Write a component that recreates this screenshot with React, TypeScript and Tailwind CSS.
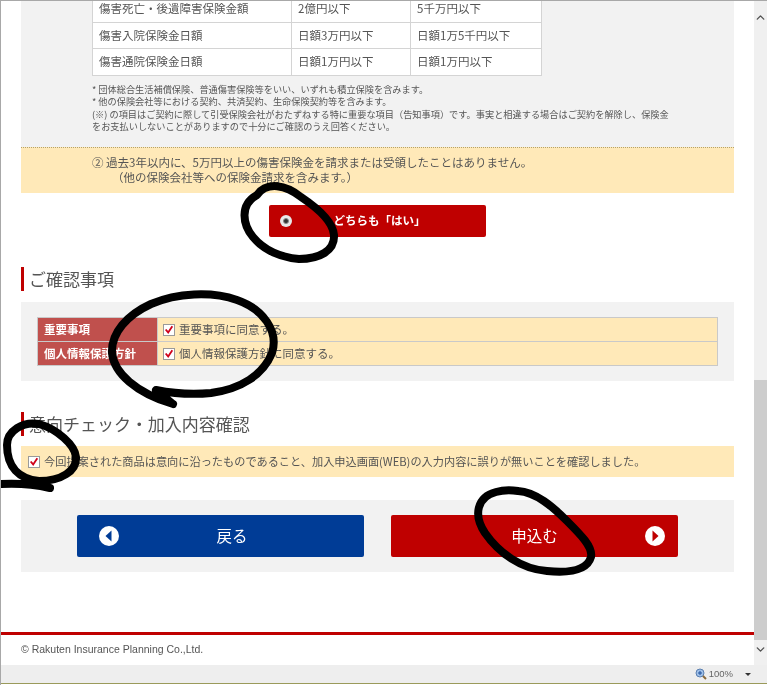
import { ChevronDown, ChevronUp } from "lucide-react"

const limits = [
  ["傷害死亡・後遺障害保険金額", "2億円以下", "5千万円以下"],
  ["傷害入院保険金日額", "日額3万円以下", "日額1万5千円以下"],
  ["傷害通院保険金日額", "日額1万円以下", "日額1万円以下"],
]

const consents = [
  ["重要事項", "重要事項に同意する。"],
  ["個人情報保護方針", "個人情報保護方針に同意する。"],
]

function CheckMark() {
  return (
    <span className="flex h-[12px] w-[12px] shrink-0 items-center justify-center border border-[#9a9a9a] bg-white">
      <svg viewBox="0 0 12 12" className="h-[11px] w-[11px]">
        <path d="M2 6 L5 9.5 L10 2" fill="none" stroke="#d0021b" strokeWidth="2.2" />
      </svg>
    </span>
  )
}

function Heading({ title }: { title: string }) {
  return (
    <h2 className="flex h-[24px] items-center border-l-[3px] border-[#bf0000] pl-[5px] text-[17px] font-normal text-[#555]">
      {title}
    </h2>
  )
}

function RoundArrow({ left }: { left?: boolean }) {
  return (
    <svg viewBox="0 0 20 20" className="h-[20px] w-[20px]">
      <circle cx="10" cy="10" r="10" fill="#fff" />
      <path
        d={left ? "M12.5 4.5 L6.5 10 L12.5 15.5 Z" : "M7.5 4.5 L13.5 10 L7.5 15.5 Z"}
        fill={left ? "#003c96" : "#bf0000"}
      />
    </svg>
  )
}

function Scribbles() {
  return (
    <svg viewBox="0 0 767 685" className="pointer-events-none absolute top-0 left-0 h-[685px] w-[767px]">
      <g fill="none" stroke="#000" strokeWidth="8" strokeLinecap="round" strokeLinejoin="round">
        <path d="M256 194 C266 180 285 184 300 196 C318 208 332 222 333 234 C334 250 318 258 298 258 C278 256 262 248 252 236 C242 224 238 204 256 194" />
        <path d="M172 403 L155 389 C170 392 190 394 210 392 C240 388 262 374 271 352 C278 330 262 308 236 299 C210 290 176 292 150 303 C126 314 110 332 111 352 C113 372 135 392 172 403" />
        <path d="M6 444 C6 430 22 420 38 423 C56 428 74 444 75 456 C76 470 60 480 38 480 C18 478 6 466 6 444 M0 483 C18 482 36 484 49 487" />
        <path d="M517 490 C535 491 552 506 566 520 C580 534 592 546 590 556 C586 570 566 572 546 570 C520 568 498 552 484 532 C472 514 476 496 495 491 C502 489 510 489 517 490" />
      </g>
    </svg>
  )
}

export default function App() {
  return (
    <div className="relative flex h-[685px] w-[767px] flex-col overflow-hidden border-t border-l border-[#a8a8a8] bg-white font-['Noto_Sans_CJK_JP','Liberation_Sans',sans-serif] text-[#555] blur-[0.35px]">
      <div className="flex h-[664px] min-h-0">
        <main className="flex w-[753px] flex-col overflow-hidden">
          <div className="px-[20px]">
            <section className="h-[146px] overflow-hidden bg-[#f2f2f2] pl-[71px]">
              <table className="mt-[-6px] w-[450px] table-fixed border-collapse bg-white text-[11.5px]">
                <tbody>
                  {limits.map((row) => (
                    <tr key={row[0]} className="h-[26.5px]">
                      <td className="w-[199px] border border-[#d4d4d4] pl-[6px]">{row[0]}</td>
                      <td className="w-[119px] border border-[#d4d4d4] pl-[6px]">{row[1]}</td>
                      <td className="border border-[#d4d4d4] pl-[6px]">{row[2]}</td>
                    </tr>
                  ))}
                </tbody>
              </table>
              <div className="mt-[7px] text-[9.2px] leading-[12.6px]">
                <p>* 団体総合生活補償保険、普通傷害保険等をいい、いずれも積立保険を含みます。</p>
                <p>* 他の保険会社等における契約、共済契約、生命保険契約等を含みます。</p>
                <p>(※) の項目はご契約に際して引受保険会社がおたずねする特に重要な項目（告知事項）です。事実と相違する場合はご契約を解除し、保険金</p>
                <p>をお支払いしないことがありますので十分にご確認のうえ回答ください。</p>
              </div>
            </section>
            <div className="h-[46px] border-t border-dotted border-[#b5a36a] bg-[#ffe9b8] pt-[7px] pl-[71px] text-[11.5px] leading-[15px]">
              <p>② 過去3年以内に、5万円以上の傷害保険金を請求または受領したことはありません。</p>
              <p className="pl-[20px]">（他の保険会社等への保険金請求を含みます。）</p>
            </div>

            <div className="mt-[12px] flex justify-center">
              <div className="relative flex h-[32px] w-[217px] items-center justify-center rounded-[2px] bg-[#bf0000] pl-[4px] text-[11.5px] font-bold text-white">
                <span className="absolute left-[11px] flex h-[12px] w-[12px] items-center justify-center rounded-full bg-[#e8e8e8]">
                  <span className="h-[6px] w-[6px] rounded-full border border-[#888] bg-[#333]" />
                </span>
                どちらも「はい」
              </div>
            </div>

            <div className="mt-[30px]">
              <Heading title="ご確認事項" />
            </div>
            <section className="mt-[11px] h-[79px] bg-[#f2f2f2] px-[16px] pt-[15px]">
              <table className="w-full table-fixed border-collapse text-[11.5px]">
                <tbody>
                  {consents.map(([label, text]) => (
                    <tr key={label} className="h-[24px]">
                      <th className="w-[120px] border border-[#c9c9c9] bg-[#c0504d] pl-[6px] text-left font-bold text-white">
                        {label}
                      </th>
                      <td className="border border-[#c9c9c9] bg-[#ffe9b8] pl-[5px]">
                        <span className="flex items-center gap-[4px]">
                          <CheckMark />
                          {text}
                        </span>
                      </td>
                    </tr>
                  ))}
                </tbody>
              </table>
            </section>

            <div className="mt-[31px]">
              <Heading title="意向チェック・加入内容確認" />
            </div>
            <div className="mt-[10px] flex h-[31px] items-center gap-[4px] bg-[#ffe9b8] pl-[7px] text-[11.2px]">
              <CheckMark />
              <span>今回提案された商品は意向に沿ったものであること、加入申込画面(WEB)の入力内容に誤りが無いことを確認しました。</span>
            </div>

            <section className="mt-[23px] flex h-[72px] items-center justify-center gap-[27px] bg-[#f2f2f2]">
              <div className="flex h-[42px] w-[287px] items-center rounded-[2px] bg-[#003c96] pl-[22px] text-[15.5px] text-white">
                <RoundArrow left />
                <span className="flex-1 pr-[22px] pl-[3px] text-center">戻る</span>
              </div>
              <div className="flex h-[42px] w-[287px] items-center rounded-[2px] bg-[#bf0000] pr-[13px] text-[15.5px] text-white">
                <span className="flex-1 pl-[33px] text-center">申込む</span>
                <RoundArrow />
              </div>
            </section>
          </div>

          <footer className="mt-[60px] flex-1 border-t-[3px] border-[#bf0000]">
            <p className="pt-[7px] pl-[20px] font-['Liberation_Sans',sans-serif] text-[10.5px]">
              © Rakuten Insurance Planning Co.,Ltd.
            </p>
          </footer>
        </main>

        <aside className="flex w-[13px] flex-col bg-[#f0f0f0] text-[#505050]">
          <div className="h-[379px] pt-[10px]">
            <ChevronUp size={13} strokeWidth={2.5} />
          </div>
          <div className="h-[260px] bg-[#cdcdcd]" />
          <div className="pt-[3px]">
            <ChevronDown size={13} strokeWidth={2.5} />
          </div>
        </aside>
      </div>

      <div className="flex h-[19px] items-center justify-end border-b border-[#9a9a5a] bg-[#eeeeee] pr-[16px] font-['Liberation_Sans',sans-serif] text-[9.5px] text-[#666]">
        <svg viewBox="0 0 12 12" className="mr-[2px] h-[12px] w-[12px]">
          <circle cx="5" cy="5" r="4" fill="#9fc0e8" stroke="#5b7fb0" />
          <path d="M3 5 H7 M5 3 V7" stroke="#1f4f9a" strokeWidth="1" />
          <path d="M8 8 L11 11" stroke="#8a6a3a" strokeWidth="2" />
        </svg>
        100%
        <span className="ml-[12px] h-0 w-0 border-x-[3px] border-t-[3px] border-x-transparent border-t-[#333]" />
      </div>

      <Scribbles />
    </div>
  )
}
